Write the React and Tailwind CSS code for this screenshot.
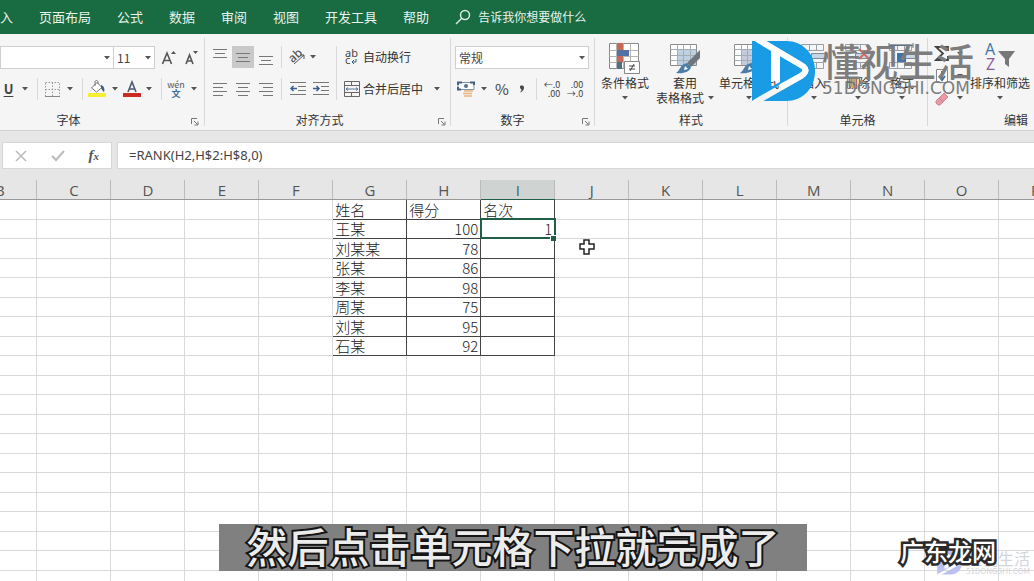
const COLUMNS = "BCDEFGHIJKLMNOPQRSTUVWXYZ".split("");
const ROWS = Array.from({ length: 60 }, (_, i) => i + 1);
const DATA = [
  ["姓名", "得分", "名次"],
  ["王某", 100, 1],
  ["刘某某", 78, ""],
  ["张某", 86, ""],
  ["李某", 98, ""],
  ["周某", 75, ""],
  ["刘某", 95, ""],
  ["石某", 92, ""],
];
const FIRST_DATA_COLUMN = COLUMNS.indexOf("G");
const TABS = ["入", "页面布局", "公式", "数据", "审阅", "视图", "开发工具", "帮助"];

function Caret() {
  return (
    <svg width="6" height="4" viewBox="0 0 6 4" className="shrink-0 fill-[#555]">
      <path d="M0 0h6L3 3.6z" />
    </svg>
  );
}

function CaretButton({ label, wide = "w-4" }) {
  return (
    <button aria-label={label} className={`flex h-[22px] shrink-0 items-center justify-center ${wide}`}>
      <Caret />
    </button>
  );
}

function Tool({ label, className = "w-5", children }) {
  return (
    <button aria-label={label} className={`flex h-[22px] shrink-0 items-center justify-center ${className}`}>
      {children}
    </button>
  );
}

function Divider() {
  return <span className="mx-1 h-[22px] w-px shrink-0 bg-[#d9d9d9]" />;
}

function GroupDivider() {
  return <div className="my-1 w-px shrink-0 bg-[#d8d8d8]" />;
}

function Dropdown({ label, value, className }) {
  return (
    <span className={`relative flex h-[23px] shrink-0 ${className}`}>
      <select aria-label={label} className="w-full appearance-none border border-[#cfcfcf] bg-white pl-[3px] text-xs text-[#444]">
        <option>{value}</option>
      </select>
      <span className="pointer-events-none absolute inset-y-0 right-1 flex items-center">
        <Caret />
      </span>
    </span>
  );
}

function GroupLabel({ children, launcher, className = "pr-[5px]" }) {
  return (
    <div className={`mt-auto flex h-[18px] items-center text-xs text-[#333] ${className}`}>
      <span className="flex-1 text-center">{children}</span>
      {launcher && (
        <button aria-label={launcher} className="mt-1">
          <svg width="8" height="8" viewBox="0 0 8 8" fill="none" stroke="#777">
            <path d="M.5 6V.5H6M3 3l3.5 3.5M7 3.5V7H3.5" />
          </svg>
        </button>
      )}
    </div>
  );
}

function Group({ className, children }) {
  return <section className={`flex shrink-0 flex-col pt-3 pb-px ${className}`}>{children}</section>;
}

function Lines({ rows }) {
  return (
    <svg width="16" height="16" viewBox="0 0 16 16" stroke="#777" fill="none">
      {rows.map(([x1, x2, y]) => (
        <path key={y} d={`M${x1} ${y}.5H${x2}`} />
      ))}
    </svg>
  );
}

function LargeTool({ lines, icon, className, inlineCaret }) {
  return (
    <button className={`flex shrink-0 flex-col items-center text-xs leading-[15px] whitespace-nowrap text-[#333] ${className}`}>
      <span className="flex h-8 items-start">{icon}</span>
      {lines.map((line, i) => (
        <span key={line} className="flex items-center gap-1">
          {line}
          {inlineCaret && i === lines.length - 1 && <Caret />}
        </span>
      ))}
      {!inlineCaret && (
        <span className="flex h-[15px] items-center">
          <Caret />
        </span>
      )}
    </button>
  );
}

function ConditionalIcon() {
  return (
    <svg width="32" height="32" viewBox="0 0 32 32">
      <path d="M.5.5h29v25H.5z" fill="#fff" stroke="#8a8a8a" />
      <path d="M.5 7.500h29M.5 13.500h29M.5 19.500h29M7.500.5v25M14.500.5v25M21.500.5v25" stroke="#b5b5b5" />
      <path d="M8 0h6v7H8zM8 13h6v6H8z" fill="#c66a55" />
      <path d="M8 7h12v6H8z" fill="#5470a5" />
      <path d="M8 19h5v7H8z" fill="#4e7183" />
      <path d="M15.5 18.5h15v12h-15z" fill="#fff" stroke="#888" />
      <path d="M20 23h6M20 26h6M25 21l-4 7" stroke="#444" fill="none" />
    </svg>
  );
}

function BrushTableIcon({ plain }) {
  return (
    <svg width="32" height="32" viewBox="0 0 32 32">
      <path d="M1.5 1.5h26v21h-26z" fill="#fff" stroke="#8a8a8a" />
      <path d="M8 7h19v15H8z" fill={plain ? "#c4cbdd" : "#bdd0e3"} />
      <path d="M1.5 6.5h26M1.5 12.5h26M1.5 17.5h26M8.5 1.5v21M14.5 1.5v21M21.5 1.5v21" stroke="#a5adb5" />
      <path d="M31 7v8l-9 9-4-4z" fill="#6d757d" />
      <path d="M18 20l4 4c-1 5-8 7-15 6 4-2 4-9 11-10z" fill="#4c7ca8" />
      <path d="M16 23l3 3-4 1z" fill="#fff" />
    </svg>
  );
}

function CellsIcon({ kind }) {
  return (
    <svg width="32" height="30" viewBox="0 0 32 30" fill="none">
      <path d="M3.5 1.5h22v6h-22zM3.5 19.5h22v6h-22zM11.5 1.5v6M18.5 1.5v6M11.5 19.5v6M18.5 19.5v6" stroke="#9a9fa5" />
      <path d="M13.5 10.5h16v5h-16z" fill="#c7d6e6" stroke="#7e8b98" />
      {kind === "insert" && <path d="M10 13H3m3-3-3 3 3 3" stroke="#3a6ea5" strokeWidth="1.5" />}
      {kind === "delete" && <path d="M17 6l10 10M27 6 17 16" stroke="#cf6b58" strokeWidth="2" />}
      {kind === "format" && (
        <>
          <path d="M3 0v5M27 0v5M3 2.500h24" stroke="#5b6f86" />
          <path d="M11 10h9v9h-9z" fill="#3f73b0" />
        </>
      )}
    </svg>
  );
}

function Ribbon() {
  return (
    <div className="flex h-[97px] shrink-0 overflow-hidden border-b border-[#d2d2d2] bg-[#f5f5f5]">
      <Group className="w-[204px]">
        <div className="flex items-center">
          <Dropdown label="字体名称" value="" className="w-[114px]" />
          <Dropdown label="字号" value="11" className="-ml-px w-[42px]" />
          <Tool label="增大字号" className="ml-[3px] w-[22px]">
            <svg width="16" height="16" viewBox="0 0 16 16" fill="none" stroke="#555">
              <path d="M1.500 14 6 3l4.500 11M3 10.500h6" strokeWidth="1.600" />
              <path d="M10 4h5l-2.500-3z" fill="#555" stroke="none" />
            </svg>
          </Tool>
          <Tool label="减小字号" className="w-[22px]">
            <svg width="16" height="16" viewBox="0 0 16 16" fill="none" stroke="#555">
              <path d="M3 14l3.500-9 3.500 9M4.500 11h4" strokeWidth="1.600" />
              <path d="M10 1h5l-2.500 3z" fill="#555" stroke="none" />
            </svg>
          </Tool>
        </div>
        <div className="mt-[9px] flex items-center">
          <Tool label="下划线" className="w-[17px]">
            <span className="text-[13px] font-bold text-[#444] underline underline-offset-2">U</span>
          </Tool>
          <CaretButton label="下划线选项" />
          <Divider />
          <Tool label="边框">
            <svg width="15" height="15" viewBox="0 0 15 15" fill="none" stroke="#999">
              <path d="M.5.5h14v14H.5zM7.500.5v14M.5 7.500h14" strokeDasharray="1.500 1.500" />
              <path d="M0 14.500h15" stroke="#888" />
            </svg>
          </Tool>
          <CaretButton label="边框选项" />
          <Divider />
          <Tool label="填充颜色">
            <svg width="18" height="18" viewBox="0 0 18 18" fill="none">
              <path d="M0 13h18v4H0z" fill="#f4ee35" />
              <path d="M3.500 8 9 2.500l5 5L8.500 12z" fill="#fff" stroke="#777" />
              <path d="M7 6V2c0-2 3-2 3 0v2" stroke="#777" />
              <path d="M13 5c3 1 4 4 3 7-2-1-2-3-3-4z" fill="#3e5f85" />
            </svg>
          </Tool>
          <CaretButton label="填充颜色选项" />
          <Tool label="字体颜色" className="w-[18px]">
            <svg width="18" height="18" viewBox="0 0 18 18" fill="none">
              <path d="M0 13h18v4H0z" fill="#cb2b22" />
              <path d="M5 12 9 2l4 10M6.500 9h5" stroke="#4b5b70" strokeWidth="1.600" />
            </svg>
          </Tool>
          <CaretButton label="字体颜色选项" />
          <Divider />
          <Tool label="拼音指南" className="w-5 flex-col">
            <span className="text-[9px] leading-[8px] text-[#555]">wén</span>
            <span className="text-[9px] leading-[9px] font-bold text-[#3d6d9b]">文</span>
          </Tool>
          <CaretButton label="拼音选项" />
        </div>
        <GroupLabel launcher="字体设置">
          <span className="-ml-[54px]">字体</span>
        </GroupLabel>
      </Group>
      <GroupDivider />

      <Group className="w-[245px]">
        <div className="flex">
          <div className="flex flex-col gap-[10px] pl-1">
            <div className="flex items-center">
              <div className="flex gap-px">
                <Tool label="顶端对齐" className="w-[22px]"><Lines rows={[[1, 15, 0], [3, 13, 4], [1, 15, 8]]} /></Tool>
                <Tool label="垂直居中" className="w-[22px] bg-[#c9c9c9]"><Lines rows={[[1, 15, 4], [3, 13, 8], [1, 15, 12]]} /></Tool>
                <Tool label="底端对齐" className="w-[22px]"><Lines rows={[[1, 15, 7], [3, 13, 11], [1, 15, 15]]} /></Tool>
              </div>
              <Divider />
              <Tool label="方向" className="w-[22px]">
                <svg width="18" height="18" viewBox="0 0 18 18" fill="none" stroke="#555" className="overflow-visible">
                  <text x="1" y="12" fontSize="12" fontFamily="Noto Sans" fontWeight="500" fill="#555" stroke="none" transform="rotate(-42 7 9)">ab</text>
                  <path d="M6 16 16 7M16 11V7h-4" />
                </svg>
              </Tool>
              <CaretButton label="方向选项" wide="w-[10px]" />
            </div>
            <div className="flex items-center">
              <div className="flex gap-px">
                <Tool label="左对齐" className="w-[22px]"><Lines rows={[[1, 15, 2], [1, 11, 6], [1, 15, 10], [1, 11, 14]]} /></Tool>
                <Tool label="居中" className="w-[22px]"><Lines rows={[[1, 15, 2], [3, 13, 6], [1, 15, 10], [3, 13, 14]]} /></Tool>
                <Tool label="右对齐" className="w-[22px]"><Lines rows={[[1, 15, 2], [5, 15, 6], [1, 15, 10], [5, 15, 14]]} /></Tool>
              </div>
              <Divider />
              <Tool label="减少缩进" className="w-[23px]">
                <svg width="18" height="16" viewBox="0 0 18 16" fill="none" stroke="#777">
                  <path d="M1 1.500h16M9 5.500h8M9 9.500h8M1 13.500h16" />
                  <path d="M8 7.500H2M4.500 5 2 7.500 4.500 10" stroke="#3a5f8a" strokeWidth="1.500" />
                </svg>
              </Tool>
              <Tool label="增加缩进" className="w-[23px]">
                <svg width="18" height="16" viewBox="0 0 18 16" fill="none" stroke="#777">
                  <path d="M1 1.500h16M9 5.500h8M9 9.500h8M1 13.500h16" />
                  <path d="M1 7.500h6M4.500 5 7 7.500 4.500 10" stroke="#3a5f8a" strokeWidth="1.500" />
                </svg>
              </Tool>
            </div>
          </div>
          <span className="mx-1 w-px bg-[#d9d9d9]" />
          <div className="flex flex-col gap-[10px] text-xs text-[#333]">
            <button className="flex h-[22px] items-center gap-[3px] pl-[3px]">
              <svg width="16" height="18" viewBox="0 0 16 18" fill="none" stroke="#555" className="overflow-visible">
                <text x="1" y="9" fontSize="11" fontFamily="Noto Sans" fill="#444" stroke="none">ab</text>
                <text x="1" y="16" fontSize="11" fontFamily="Noto Sans" fill="#444" stroke="none">c</text>
                <path d="M12 11v3H8m2-2-2 2 2 2" stroke="#3a5f8a" />
              </svg>
              自动换行
            </button>
            <div className="flex items-center">
              <button className="flex h-[22px] items-center gap-[3px] pl-[3px]">
                <svg width="16" height="16" viewBox="0 0 16 16" fill="none" stroke="#666">
                  <path d="M.5.5h15v15H.5zM.5 4.500h15M.5 11.500h15M7.500.5v4M7.500 11.500v4" />
                  <path d="M2 8h12M4 6.500 2 8l2 1.500M12 6.500 14 8l-2 1.500" stroke="#56789b" />
                </svg>
                合并后居中
              </button>
              <CaretButton label="合并选项" wide="ml-[6px] w-4" />
            </div>
          </div>
        </div>
        <GroupLabel launcher="对齐设置" className="pr-1">
          <span className="-ml-1">对齐方式</span>
        </GroupLabel>
      </Group>
      <GroupDivider />

      <Group className="w-[143px]">
        <Dropdown label="数字格式" value="常规" className="mr-[5px] ml-1" />
        <div className="mt-[9px] flex items-center pl-[5px]">
          <Tool label="会计数字格式">
            <svg width="18" height="18" viewBox="0 0 18 18" fill="none">
              <path d="M1 2.500h16v7H1z" fill="#fff" stroke="#7f93a5" />
              <path d="M1 5V2.500h4M13 2.500h4V5M1 7v2.500h3" stroke="#45617e" strokeWidth="2" />
              <circle cx="9" cy="6" r="2" fill="#55708a" />
              <path d="M7 11h9M6 13.500h9M7 16h8" stroke="#e8b37c" strokeWidth="1.500" />
            </svg>
          </Tool>
          <CaretButton label="会计格式选项" />
          <Tool label="百分比样式"><span className="text-[15px] text-[#444]">%</span></Tool>
          <Tool label="千位分隔样式">
            <svg width="6" height="8" viewBox="0 0 6 8">
              <path d="M1 1.500C1 0 5 0 5 2.500 5 5 3.500 6.500 1 7.500c1-1.500 1.500-2 1.500-3C1.500 4 1 3 1 1.500z" fill="#444" />
            </svg>
          </Tool>
          <Divider />
          <Tool label="增加小数位数" className="w-[22px]">
            <span className="text-right text-[9px] leading-[9px] text-[#444]">←.0<br />.00</span>
          </Tool>
          <Tool label="减少小数位数" className="w-[24px]">
            <span className="text-right text-[9px] leading-[9px] text-[#444]">.00<br />→.0</span>
          </Tool>
        </div>
        <GroupLabel launcher="数字设置" className="pr-1">
          <span className="-ml-2">数字</span>
        </GroupLabel>
      </Group>
      <GroupDivider />

      <Group className="w-[192px]">
        <div className="-mt-[3px] flex">
          <LargeTool className="w-[60px]" lines={["条件格式"]} icon={<ConditionalIcon />} />
          <LargeTool className="w-[60px]" lines={["套用", "表格格式"]} inlineCaret icon={<BrushTableIcon />} />
          <LargeTool className="w-[68px]" lines={["单元格样式"]} icon={<BrushTableIcon plain />} />
        </div>
        <GroupLabel className="">样式</GroupLabel>
      </Group>
      <GroupDivider />

      <Group className="w-[139px]">
        <div className="-mt-[3px] flex pl-1">
          <LargeTool className="w-[44px]" lines={["插入"]} icon={<CellsIcon kind="insert" />} />
          <LargeTool className="w-[44px]" lines={["删除"]} icon={<CellsIcon kind="delete" />} />
          <LargeTool className="w-[44px]" lines={["格式"]} icon={<CellsIcon kind="format" />} />
        </div>
        <GroupLabel className="">单元格</GroupLabel>
      </Group>
      <GroupDivider />

      <Group className="w-[176px]">
        <div className="-mt-[3px] flex">
          <div className="flex w-[40px] flex-col">
            {[
              ["自动求和", <path key="s" d="M14 5V1H2l7 6.500L2 14h12v-4" stroke="#444" strokeWidth="1.800" />],
              ["填充", <g key="f"><path d="M2.500 1.500h11v13h-11z" fill="#fff" stroke="#888" /><path d="M8 3v8M5 8l3 4 3-4" stroke="#3f6f9f" strokeWidth="2" /></g>],
              ["清除", <path key="c" d="M2 11 10 3l4 4-8 8H4l-2-2zM5 8l4 4" fill="#e99aa6" stroke="#cf8791" />],
            ].map(([label, art]) => (
              <button key={label} aria-label={label} className="flex h-[22px] items-center gap-[7px] pl-[6px]">
                <svg width="16" height="16" viewBox="0 0 16 16" fill="none">{art}</svg>
                <Caret />
              </button>
            ))}
          </div>
          <LargeTool
            className="w-[64px]"
            lines={["排序和筛选"]}
            icon={
              <svg width="32" height="32" viewBox="0 0 32 32" fill="none" className="overflow-visible">
                <text x="1" y="12" fontSize="16" fontFamily="Open Sans" fill="#3c74a8">A</text>
                <text x="2" y="27" fontSize="16" fontFamily="Open Sans" fill="#8f5a9c">Z</text>
                <path d="M14 8h17l-6 8v8l-4-3v-5z" fill="#777" />
              </svg>
            }
          />
        </div>
        <GroupLabel className="">编辑</GroupLabel>
      </Group>
    </div>
  );
}

function FormulaBar() {
  return (
    <div className="flex h-[49px] shrink-0 items-center gap-[5px] bg-[#e6e6e6] pl-[2px]">
      <div className="flex h-[27px] w-[110px] items-center justify-around border border-[#d6d6d6] bg-white">
        <button aria-label="取消">
          <svg width="12" height="12" viewBox="0 0 12 12" stroke="#bbb" strokeWidth="1.500"><path d="m1 1 10 10M11 1 1 11" /></svg>
        </button>
        <button aria-label="输入">
          <svg width="14" height="12" viewBox="0 0 14 12" fill="none" stroke="#bbb" strokeWidth="2"><path d="m1 6 4 4 8-9" /></svg>
        </button>
        <button aria-label="插入函数" className="font-['Liberation_Serif',serif] text-[15px] font-bold text-[#555] italic">
          f<span className="text-[11px]">x</span>
        </button>
      </div>
      <input
        aria-label="编辑栏"
        defaultValue="=RANK(H2,H$2:H$8,0)"
        className="h-[27px] min-w-0 flex-1 border border-r-0 border-[#d6d6d6] bg-white px-[11px] pb-[2px] font-['Noto_Sans',sans-serif] text-[13px] text-[#444]"
      />
    </div>
  );
}

function Cell({ row, column }) {
  const dataColumn = column - FIRST_DATA_COLUMN;
  const filled = row < DATA.length && dataColumn >= 0 && dataColumn < 3;
  if (!filled) return <td className="border-r border-b border-[#d9d9d9]" />;
  const value = DATA[row][dataColumn];
  const active = row === 1 && dataColumn === 2;
  return (
    <td
      className={`border border-[#444] px-[2px] text-[15px] leading-[17px] font-light whitespace-nowrap text-[#222] ${
        typeof value === "number" ? "text-right" : "text-left"
      } ${active ? "relative outline-2 -outline-offset-1 outline-[#1f5f45]" : ""}`}
    >
      {value}
      {active && <span className="absolute -right-[2px] -bottom-[3px] size-[6px] border-t border-l border-white bg-[#1f5f45]" />}
    </td>
  );
}

function Sheet() {
  return (
    <div className="min-h-0 flex-1 overflow-hidden bg-white">
      <table className="-ml-[37px] w-[1850px] table-fixed border-collapse">
        <thead>
          <tr className="h-[19px] bg-[#e6e6e6]">
            {COLUMNS.map((name) => (
              <th
                key={name}
                className={`border-r border-b p-0 pt-[2px] text-center font-['Open_Sans',sans-serif] text-[15px] leading-[15px] font-normal ${
                  name === "I" ? "border-r-[#bbb] border-b-[#1f5f45] bg-[#cfd3d1] text-[#3b6b58]" : "border-r-[#bbb] border-b-[#999] text-[#555]"
                }`}
              >
                {name}
              </th>
            ))}
          </tr>
        </thead>
        <tbody>
          {ROWS.map((n) => (
            <tr key={n} className="odd:h-[20px] even:h-[19px]">
              {COLUMNS.map((name, column) => (
                <Cell key={name} row={n - 1} column={column} />
              ))}
            </tr>
          ))}
        </tbody>
      </table>
    </div>
  );
}

function BrandMark({ id, className, color }) {
  return (
    <svg viewBox="0 0 63 61" className={className}>
      <mask id={id} maskUnits="userSpaceOnUse" x="0" y="0" width="63" height="61">
        <path d="M0 0h63v61H0z" fill="#fff" />
        <path d="M5-2 49 24q9 5 0 11L2 62" fill="none" stroke="#000" strokeWidth="6" />
        <path d="M19 8l9 5v28l-9 5z" fill="#000" />
      </mask>
      <path d="M0 0h34c17 0 29 13 29 30S51 60 34 60H0z" fill={color} mask={`url(#${id})`} />
      <path d="M5-2 49 24q9 5 0 11l-20 11" fill="none" stroke="#fff" strokeWidth="6" />
      <path d="M19 8l9 5v27h-9z" fill="#fff" />
    </svg>
  );
}

function Watermark() {
  return (
    <div className="pointer-events-none absolute top-[41px] left-[752px] flex items-start gap-[7px]">
      <BrandMark id="brand-large" className="h-[61px] w-[63px]" color="#1a9be6" />
      <div className="flex flex-col text-[#7d7d7d]">
        <span className="text-[38px] leading-[38px] font-medium whitespace-nowrap">懂视生活</span>
        <span className="font-['DejaVu_Sans',sans-serif] text-[17px] leading-[18px]">51DONGSHI.COM</span>
      </div>
    </div>
  );
}

export default function App() {
  return (
    <div className="relative flex h-screen flex-col overflow-hidden bg-white font-['Noto_Sans_CJK_SC','Noto_Sans',sans-serif]">
      <nav className="flex h-[34px] shrink-0 items-center gap-[26px] overflow-hidden bg-[#196b41] text-[13px] whitespace-nowrap text-[#e8f3ec]">
        {TABS.map((tab) => (
          <button key={tab}>{tab}</button>
        ))}
        <button className="flex items-center gap-[7px] text-xs">
          <svg width="16" height="16" viewBox="0 0 16 16" fill="none" stroke="#dcebe2" strokeWidth="1.500">
            <circle cx="10" cy="6" r="4.500" />
            <path d="m7 9-6 6" />
          </svg>
          告诉我你想要做什么
        </button>
      </nav>
      <Ribbon />
      <FormulaBar />
      <Sheet />
      <Watermark />
      <svg width="18" height="18" viewBox="0 0 18 18" className="pointer-events-none absolute top-[238px] left-[578px]">
        <path d="M6 2h5v4h5v5h-5v5H6v-5H2V6h4z" fill="#fff" stroke="#222" strokeWidth="1.500" />
      </svg>
      <p className="absolute bottom-[10px] left-[219px] flex h-[47px] w-[588px] items-center justify-center bg-[#808080] pb-1 text-[41px] leading-[41px] font-medium whitespace-nowrap text-[#ececec] [paint-order:stroke] [-webkit-text-stroke:4px_#151515]">
        然后点击单元格下拉就完成了
      </p>
      <div className="absolute right-[4px] bottom-[5px] flex items-center gap-1 text-[#d3d5dc]">
        <BrandMark id="brand-small" className="h-6 w-[25px]" color="#bcc0ee" />
        <div className="flex flex-col">
          <span className="text-base leading-4">懂视生活</span>
          <span className="text-[8px] leading-[10px]">51DONGSHI.COM</span>
        </div>
      </div>
      <p className="absolute right-[38px] bottom-[14px] text-[24px] leading-8 font-medium whitespace-nowrap text-white [paint-order:stroke] [-webkit-text-stroke:5px_#2a2a2a]">
        广东龙网
      </p>
    </div>
  );
}
